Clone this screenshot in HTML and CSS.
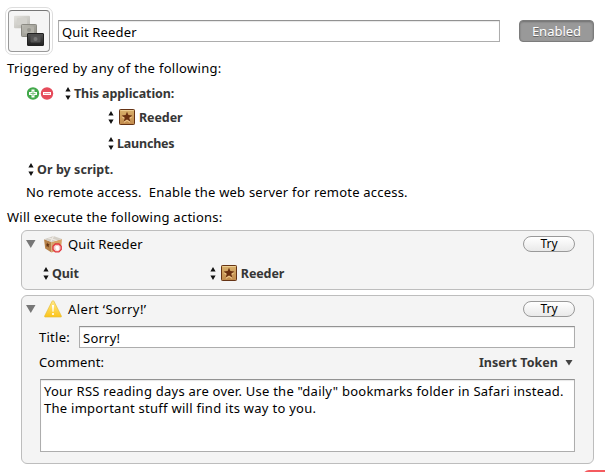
FILE: index.html
```
<!DOCTYPE html>
<html lang="en">
<head>
<meta charset="utf-8">
<title>Quit Reeder</title>
<link rel="stylesheet" href="styles.css">
</head>
<body>
<svg class="defs" width="0" height="0" aria-hidden="true">
  <defs>
    <linearGradient id="tan" x2="0" y2="1"><stop stop-color="#d9b16c"/><stop offset="1" stop-color="#c18a4c"/></linearGradient>
    <linearGradient id="gold" x2="0" y2="1"><stop stop-color="#ffe98a"/><stop offset="1" stop-color="#fcc419"/></linearGradient>
    <linearGradient id="key1" x2="1" y2="1"><stop stop-color="#e3e2de"/><stop offset="1" stop-color="#b9b8b2"/></linearGradient>
    <linearGradient id="key2" x2="1" y2="1"><stop stop-color="#bebdb5"/><stop offset="1" stop-color="#8d8c84"/></linearGradient>
    <linearGradient id="key3" x2="0" y2="1"><stop stop-color="#555"/><stop offset="1" stop-color="#202020"/></linearGradient>
  </defs>
  <symbol id="updown" viewBox="0 0 6 13"><path d="M3 0L5.600 4.500H.4zM3 13L.4 8.500h5.200z" fill="#111"/></symbol>
  <symbol id="reeder" viewBox="0 0 16 16">
    <rect x=".5" y=".5" width="15" height="15" rx=".8" fill="url(#tan)" stroke="#653315"/>
    <path d="M1.500 1.500h13" stroke="#edce93"/>
    <path d="M8 3.600l1.400 3.300 3.900.3-3 2.400 1 3.600L8 11.300l-3.300 1.900 1-3.600-3-2.400 3.900-.3z" transform="translate(0 .8)" fill="#edc487"/>
    <path d="M8 2.800l1.400 3.300 3.900.3-3 2.400 1 3.600L8 10.500l-3.300 1.900 1-3.600-3-2.400 3.900-.3z" fill="#6b3112"/>
  </symbol>
</svg>

<header class="header">
  <div class="well">
    <svg width="40" height="40" viewBox="0 0 40 40">
      <rect x="5" y="4.700" width="16" height="12.500" rx="1" fill="url(#key1)"/>
      <rect x="8" y="7" width="10" height="7" rx="1" fill="#d3d2cd"/>
      <rect x="12.500" y="13.500" width="15" height="12" rx=".8" fill="url(#key2)" stroke="#8b8a83"/>
      <rect x="15" y="15.500" width="10" height="7" rx="1" fill="#b3b2aa"/>
      <circle cx="20" cy="19" r="2" fill="#999890"/>
      <rect x="18.500" y="22.500" width="16" height="12" rx=".5" fill="url(#key3)" stroke="#222"/>
      <rect x="21.500" y="24.500" width="10" height="7" rx="1" fill="#555"/>
      <circle cx="26.500" cy="28" r="2" fill="#777"/>
    </svg>
  </div>
  <div class="field name"><span class="t-name">Quit Reeder</span></div>
  <div class="enabled"><span>Enabled</span></div>
</header>

<section class="triggers">
  <div class="row heading"><span class="t-trig">Triggered by any of the following:</span></div>
  <div class="row app">
    <svg class="addremove" width="27" height="13" viewBox="0 0 27 13">
      <circle cx="6" cy="6.500" r="6.200" fill="#43a94b"/>
      <path d="M6 2.500v8M2 6.500h8" stroke="#fff" stroke-width="3"/>
      <path d="M6 4v5M3.500 6.500h5" stroke="#7cc381"/>
      <circle cx="20" cy="6.500" r="6.200" fill="#e64b5b"/>
      <path d="M16 6.500h8" stroke="#fff" stroke-width="3"/>
      <path d="M17 6.500h6" stroke="#f09aa3"/>
    </svg>
    <svg class="ud"><use href="#updown"/></svg><b class="t-this">This application:</b>
  </div>
  <div class="row target"><svg class="ud"><use href="#updown"/></svg><svg class="reeder"><use href="#reeder"/></svg><b class="t-reeder">Reeder</b></div>
  <div class="row launches"><svg class="ud"><use href="#updown"/></svg><b class="t-launch">Launches</b></div>
  <div class="row script"><svg class="ud"><use href="#updown"/></svg><b class="t-script">Or by script.</b></div>
  <div class="row remote"><span class="t-remote">No remote access.&nbsp; Enable the web server for remote access.</span></div>
  <div class="row heading will"><span class="t-will">Will execute the following actions:</span></div>
</section>

<main class="actions">
  <section class="panel quit">
    <div class="panel-head">
      <svg class="disclosure" viewBox="0 0 10 8"><path d="M0 0h9.500L4.750 8z" fill="#777"/></svg>
      <svg class="icon" viewBox="0 0 18 18">
        <path d="M0 4.200L7.500 7v10.500L1.200 13.500z" fill="#b7824a"/>
        <path d="M7.500 7L18 4l-1 10-9.500 3.500z" fill="#d6a367"/>
        <path d="M0 4.200L9.500 1 18 4 7.500 7z" fill="#d4cfc7"/>
        <path d="M4 2.800L12.500 5.500M9.500 1L7 6.500" stroke="#eeeae4" stroke-width="1.200"/>
        <path d="M3.500 7.500l.7 1.500 1.400.6-1 1 .2 1.800-1.400-1.100-1.200.1.500-1.300-.6-1.300 1.100.1z" fill="#643414"/>
        <path d="M11.300 9h3.600l2.300 2.300v3.200l-2.300 2.400h-3.600L9 14.500v-3.200z" fill="#f6c9c7" stroke="#e1343d" stroke-width="1.300"/>
        <path d="M11.300 12.700l.5-1.700h2.400l.7 1v2.300l-1 1.200h-1.300z" fill="#fff"/>
      </svg>
      <span class="t-quit">Quit Reeder</span>
      <div class="try"><span>Try</span></div>
    </div>
    <div class="quit-row">
      <svg class="ud"><use href="#updown"/></svg><b class="t-q">Quit</b>
      <div class="quit-target"><svg class="ud"><use href="#updown"/></svg><svg class="reeder"><use href="#reeder"/></svg><b class="t-reeder">Reeder</b></div>
    </div>
  </section>

  <section class="panel alert">
    <div class="panel-head">
      <svg class="disclosure" viewBox="0 0 10 8"><path d="M0 0h9.500L4.750 8z" fill="#777"/></svg>
      <svg class="icon" viewBox="0 0 18 18">
        <path d="M9 .7q.6 0 1 .7l7.400 14.700q.3.900-.6.900H1.200q-.9 0-.6-.9L8 1.400q.4-.7 1-.7z" fill="url(#gold)" stroke="#e7bf3c" stroke-width=".7"/>
        <path d="M8 5h2l-.5 6.800h-1z" fill="#fff"/><circle cx="9" cy="14" r="1.100" fill="#fff"/>
      </svg>
      <span class="t-alert">Alert ‘Sorry!’</span>
      <div class="try"><span>Try</span></div>
    </div>
    <div class="title-row"><span class="t-title">Title:</span><div class="field"><span class="t-sorry">Sorry!</span></div></div>
    <div class="comment-row">
      <span class="t-comment">Comment:</span>
      <div class="token"><b class="t-token">Insert Token</b><svg width="8" height="6" viewBox="0 0 8 6"><path d="M.5 0h7L4 5.500z" fill="#444"/></svg></div>
    </div>
    <div class="field comment">
      <div class="t-line1">Your RSS reading days are over. Use the "daily" bookmarks folder in Safari instead.</div>
      <div class="t-line2">The important stuff will find its way to you.</div>
    </div>
  </section>
</main>
<div class="badge"></div>
</body>
</html>
```
FILE: styles.css
```
* { box-sizing: border-box; }
body {
  position: relative;
  width: 605px;
  height: 472px;
  margin: 0;
  overflow: hidden;
  background: #fff;
  color: #000;
  font: 13px/17px "Noto Sans", "Open Sans", sans-serif;
  white-space: nowrap;
}
b { font-weight: 700; color: #363636; font-size: 12.5px; letter-spacing: -0.1px; }
svg { display: block; flex: none; }
.defs { position: absolute; }
.header { display: flex; height: 59px; padding: 7px 11px 0 5px; }
.well {
  width: 48px;
  height: 48px;
  padding: 2px;
  border: 1px solid #ddd;
  border-radius: 7px;
}
.well svg {
  width: 42px;
  height: 42px;
  border: 1px solid #999;
  border-top-color: #777;
  border-radius: 4px;
  background: #f5f5f5;
}
.field {
  border: 1px solid #adadad;
  border-top-color: #929292;
  background: #fff;
  box-shadow: inset 0 1px 1px #e7e7e7;
  padding: 3px 3px 0;
}
.name { width: 442px; height: 22px; margin: 13px 19px 0 5px; }
.enabled {
  display: flex;
  justify-content: center;
  width: 75px;
  height: 22px;
  margin-top: 13px;
  padding-top: 2px;
  border: 1px solid #7c7c7c;
  border-radius: 4px;
  background: #999;
  box-shadow: inset 0 1px 2px #707070;
  color: #fff;
  text-shadow: 0 1px #666;
}
.row { display: flex; align-items: center; height: 26px; }
.ud { width: 6px; height: 13px; margin-right: 3px; }
.reeder { width: 16px; height: 16px; margin: 0 4px 0 2px; }
.triggers { height: 171px; }
.heading { height: 19px; padding-left: 7px; }
.app { height: 30px; padding: 1px 0 0 27px; }
.addremove { margin-right: 11px; }
.target { height: 18px; padding-left: 108px; }
.launches { height: 34px; padding-left: 108px; }
.script { height: 18px; padding-left: 28px; }
.remote { padding: 3px 0 0 26px; }
.will { height: 25px; padding-top: 1px; }
.actions { display: flex; flex-direction: column; gap: 5px; padding: 0 11px 0 21px; }
.panel { border: 1px solid #bdbdbd; border-radius: 6px; background: #f4f4f4; }
.quit { height: 60px; }
.alert { height: 169px; }
.panel-head { display: flex; align-items: center; height: 26px; padding: 0 18px 0 4px; }
.disclosure { width: 10px; height: 8px; margin-right: 8px; }
.icon { width: 18px; height: 18px; margin-right: 6px; }
.try {
  display: flex;
  justify-content: center;
  width: 52px;
  height: 16px;
  margin-left: auto;
  border: 1px solid #999;
  border-radius: 8px;
  background: linear-gradient(#fff, #e9e9e9);
  font-size: 12px;
  line-height: 14px;
}
.quit-row { display: flex; align-items: center; height: 32px; padding-left: 21px; }
.quit-target { display: flex; align-items: center; margin-left: 131px; }
.title-row { display: flex; align-items: center; justify-content: space-between; height: 22px; margin-top: 4px; padding: 0 18px 0 17px; }
.title-row .field { width: 496px; height: 22px; }
.comment-row { display: flex; align-items: center; justify-content: space-between; height: 31px; padding: 0 20px 2px 17px; }
.token { display: flex; align-items: center; gap: 7px; }
.comment { height: 73px; margin: 0 18px; padding: 3px; }
.t-name, .t-quit, .t-comment { letter-spacing: 0.15px; }
.t-trig { letter-spacing: 0.3px; }
.t-remote { letter-spacing: 0.21px; }
.t-will { letter-spacing: 0.26px; }
.t-alert { letter-spacing: 0.4px; }
.t-title, .t-sorry { letter-spacing: 0.25px; }
.t-launch { letter-spacing: -0.2px; }
.t-script { letter-spacing: 0.05px; }
.t-token { letter-spacing: 0.05px; }
.t-line1 { letter-spacing: 0.245px; }
.t-line2 { letter-spacing: 0.27px; }
.badge {
  position: absolute;
  left: 583px;
  top: 470px;
  width: 30px;
  height: 20px;
  border-radius: 6px 0 0 0;
  background: #f45b5f;
}
```
